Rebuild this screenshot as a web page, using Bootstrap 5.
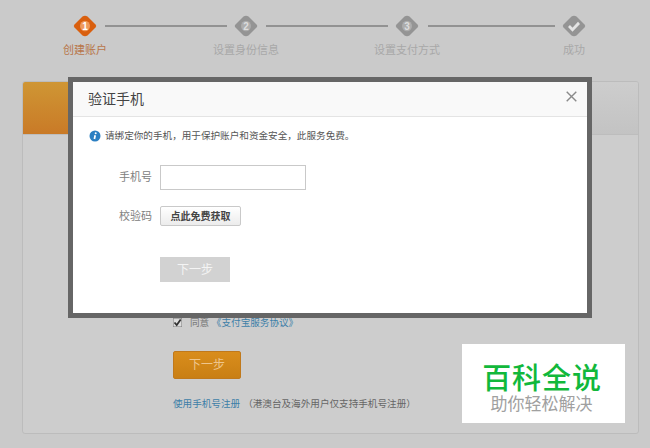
<!DOCTYPE html>
<html lang="zh"><head><meta charset="utf-8">
<link href="https://cdn.jsdelivr.net/npm/bootstrap@5.3.0/dist/css/bootstrap.min.css" rel="stylesheet">
<style>
html,body{height:448px;overflow:hidden}
body{background:#cacaca;font-family:"Liberation Sans","Noto Sans CJK SC",sans-serif;font-size:10px;color:#666;position:relative}
.steps{position:relative;height:81px}
.stepitem{position:absolute;top:15px;width:100px;text-align:center;color:#a8a8a8;font-size:11px;line-height:14px}
.stepitem.on{color:#b8764a}
.dia{display:block;margin:0 auto 6px;width:24px;height:22px}
.ln{position:absolute;top:25px;height:2px;background:#929292}
.panel{margin:0 10px 0 22px;width:617px;height:353px;border:1px solid #bcbcbc;border-radius:3px;background:#cdcdcd;overflow:hidden}
.phead{height:53px;background:linear-gradient(#cf9634,#c97a27) left top/200px 100% no-repeat,linear-gradient(#cdcdcd,#c3c3c3);border-bottom:1px solid #bdbdbd}
.pbody{padding:181px 0 0 150px}
.agree{height:14px;line-height:14px;color:#777;font-size:9.6px}
.cb{display:inline-block;width:9px;height:9px;margin-right:8px;vertical-align:-1px}
.lk{color:#3d7fa8;text-decoration:none}
.gobtn{display:block;width:68px;height:28px;margin:21px 0 18px;padding:0;border:1px solid #c0791c;border-radius:2px;background:linear-gradient(#d98d1c,#c97f14);color:#eec58c;font-size:12px}
.hint{line-height:14px;font-size:9.6px;color:#666}
.hint .lk{margin-right:3px}
.dlg{position:absolute;left:68px;top:77px;width:524px;height:241px;border:5px solid #666;background:#fff}
.dhead{height:35px;background:#f9f9f9;border-bottom:1px solid #e4e4e4;padding:0 10px 0 15px}
.dtitle{font-size:14px;color:#444;line-height:33px;margin:0;font-weight:400}
.xbtn{font-size:0;width:11px;height:11px;background:none;border:0;padding:0;margin-bottom:5px}
.notice{padding:12px 16px 0;line-height:14px;color:#555;font-size:9.6px}
.frm{padding:22px 0 0;}
.flabel{width:87px;text-align:right;font-size:11px;color:#808080;padding-right:8px}
.inp{width:146px;height:25px;min-height:25px;border:1px solid #c9c9c9;border-radius:0;background:#fff;padding:0}
.rowgap{margin-bottom:16px}
.smsbtn{height:20px;width:81px;padding:0;font-size:10px;font-weight:700;color:#444;background:linear-gradient(#fff,#ececec);border:1px solid #c9c9c9;border-radius:2px}
.nextoff{display:block;margin:31px 0 0 87px;width:70px;height:25px;border:0;padding:0;background:#d2d2d2;color:#f4f4f4;font-size:12px;border-radius:0}
.wm{position:absolute;left:462px;top:344px;width:163px;height:79px;background:#fff;text-align:center}
.wm1{font-size:29px;line-height:32px;padding-top:16px;margin-left:-3px;color:#11b83b;font-weight:500;letter-spacing:.9px;font-family:"Noto Sans CJK SC",sans-serif;white-space:nowrap}
.wm2{font-size:17px;line-height:20px;margin-top:1px;margin-left:-4px;color:#a0a0a0;font-family:"Noto Sans CJK SC",sans-serif;white-space:nowrap}
</style></head>
<body>
<div class="steps">
  <div class="stepitem on" style="left:35px"><svg class="dia" viewBox="0 0 24 21" preserveAspectRatio="none"><path d="M9.500 1.500q2.500-1.500 5 0l8 7.500q1.500 1.500 0 3l-8 7.500q-2.500 1.500-5 0l-8-7.500q-1.500-1.500 0-3z" fill="#d95f0e"/><circle cx="12" cy="10.500" r="5" fill="#ee9a5c"/><text x="12" y="14" font-size="10" font-weight="700" text-anchor="middle" fill="#fff" font-family="Liberation Sans">1</text></svg>创建账户</div>
  <div class="ln" style="left:105px;width:122px"></div>
  <div class="stepitem" style="left:196px"><svg class="dia" viewBox="0 0 24 21" preserveAspectRatio="none"><path d="M9.500 1.500q2.500-1.500 5 0l8 7.500q1.500 1.500 0 3l-8 7.500q-2.500 1.500-5 0l-8-7.500q-1.500-1.500 0-3z" fill="#949494"/><circle cx="12" cy="10.500" r="5" fill="#adadad"/><text x="12" y="14" font-size="10" font-weight="700" text-anchor="middle" fill="#ddd" font-family="Liberation Sans">2</text></svg>设置身份信息</div>
  <div class="ln" style="left:266px;width:122px"></div>
  <div class="stepitem" style="left:357px"><svg class="dia" viewBox="0 0 24 21" preserveAspectRatio="none"><path d="M9.500 1.500q2.500-1.500 5 0l8 7.500q1.500 1.500 0 3l-8 7.500q-2.500 1.500-5 0l-8-7.500q-1.500-1.500 0-3z" fill="#949494"/><circle cx="12" cy="10.500" r="5" fill="#adadad"/><text x="12" y="14" font-size="10" font-weight="700" text-anchor="middle" fill="#ddd" font-family="Liberation Sans">3</text></svg>设置支付方式</div>
  <div class="ln" style="left:428px;width:127px"></div>
  <div class="stepitem" style="left:524px"><svg class="dia" viewBox="0 0 24 21" preserveAspectRatio="none"><path d="M9.500 1.500q2.500-1.500 5 0l8 7.500q1.500 1.500 0 3l-8 7.500q-2.500 1.500-5 0l-8-7.500q-1.500-1.500 0-3z" fill="#949494"/><path d="M7 10.500l3.500 3.500 6.500-6.500" fill="none" stroke="#e4e4e4" stroke-width="2.800"/></svg>成功</div>
</div>
<div class="panel">
  <div class="phead"></div>
  <div class="pbody">
    <div class="agree"><svg class="cb" viewBox="0 0 9 9"><rect width="9" height="9" fill="#dcdcdc" stroke="#777"/><path d="M1.500 4.500l2.200 2.500 4-5.500" fill="none" stroke="#333" stroke-width="1.800"/></svg>同意 <a class="lk" href="#">《支付宝服务协议》</a></div>
    <button class="gobtn btn" type="button">下一步</button>
    <div class="hint"><a class="lk" href="#">使用手机号注册</a>（港澳台及海外用户仅支持手机号注册）</div>
  </div>
</div>
<div class="dlg">
  <div class="dhead d-flex align-items-center justify-content-between">
    <h5 class="dtitle">验证手机</h5>
    <button class="xbtn d-flex" type="button" aria-label="关闭"><svg width="11" height="11" viewBox="0 0 11 11"><path d="M.7.7l9.600 9.600M10.300.7l-9.600 9.600" stroke="#8a8a8a" stroke-width="1.400"/></svg></button>
  </div>
  <div class="notice d-flex align-items-center gap-1"><svg width="12" height="12" viewBox="0 0 12 12" class="flex-shrink-0"><circle cx="6" cy="6" r="5.500" fill="#2b7fc2"/><circle cx="6.700" cy="3.200" r="1" fill="#fff"/><path d="M6.200 5.200l-.8 3.800" stroke="#fff" stroke-width="1.700"/></svg><span>请绑定你的手机，用于保护账户和资金安全，此服务免费。</span></div>
  <div class="frm">
    <div class="d-flex align-items-center rowgap"><label class="flabel">手机号</label><input class="inp form-control" type="text" aria-label="手机号"></div>
    <div class="d-flex align-items-center"><span class="flabel">校验码</span><button class="smsbtn btn" type="button">点此免费获取</button></div>
    <button class="nextoff btn" type="button">下一步</button>
  </div>
</div>
<div class="wm"><div class="wm1">百科全说</div><div class="wm2">助你轻松解决</div></div>
</body></html>
